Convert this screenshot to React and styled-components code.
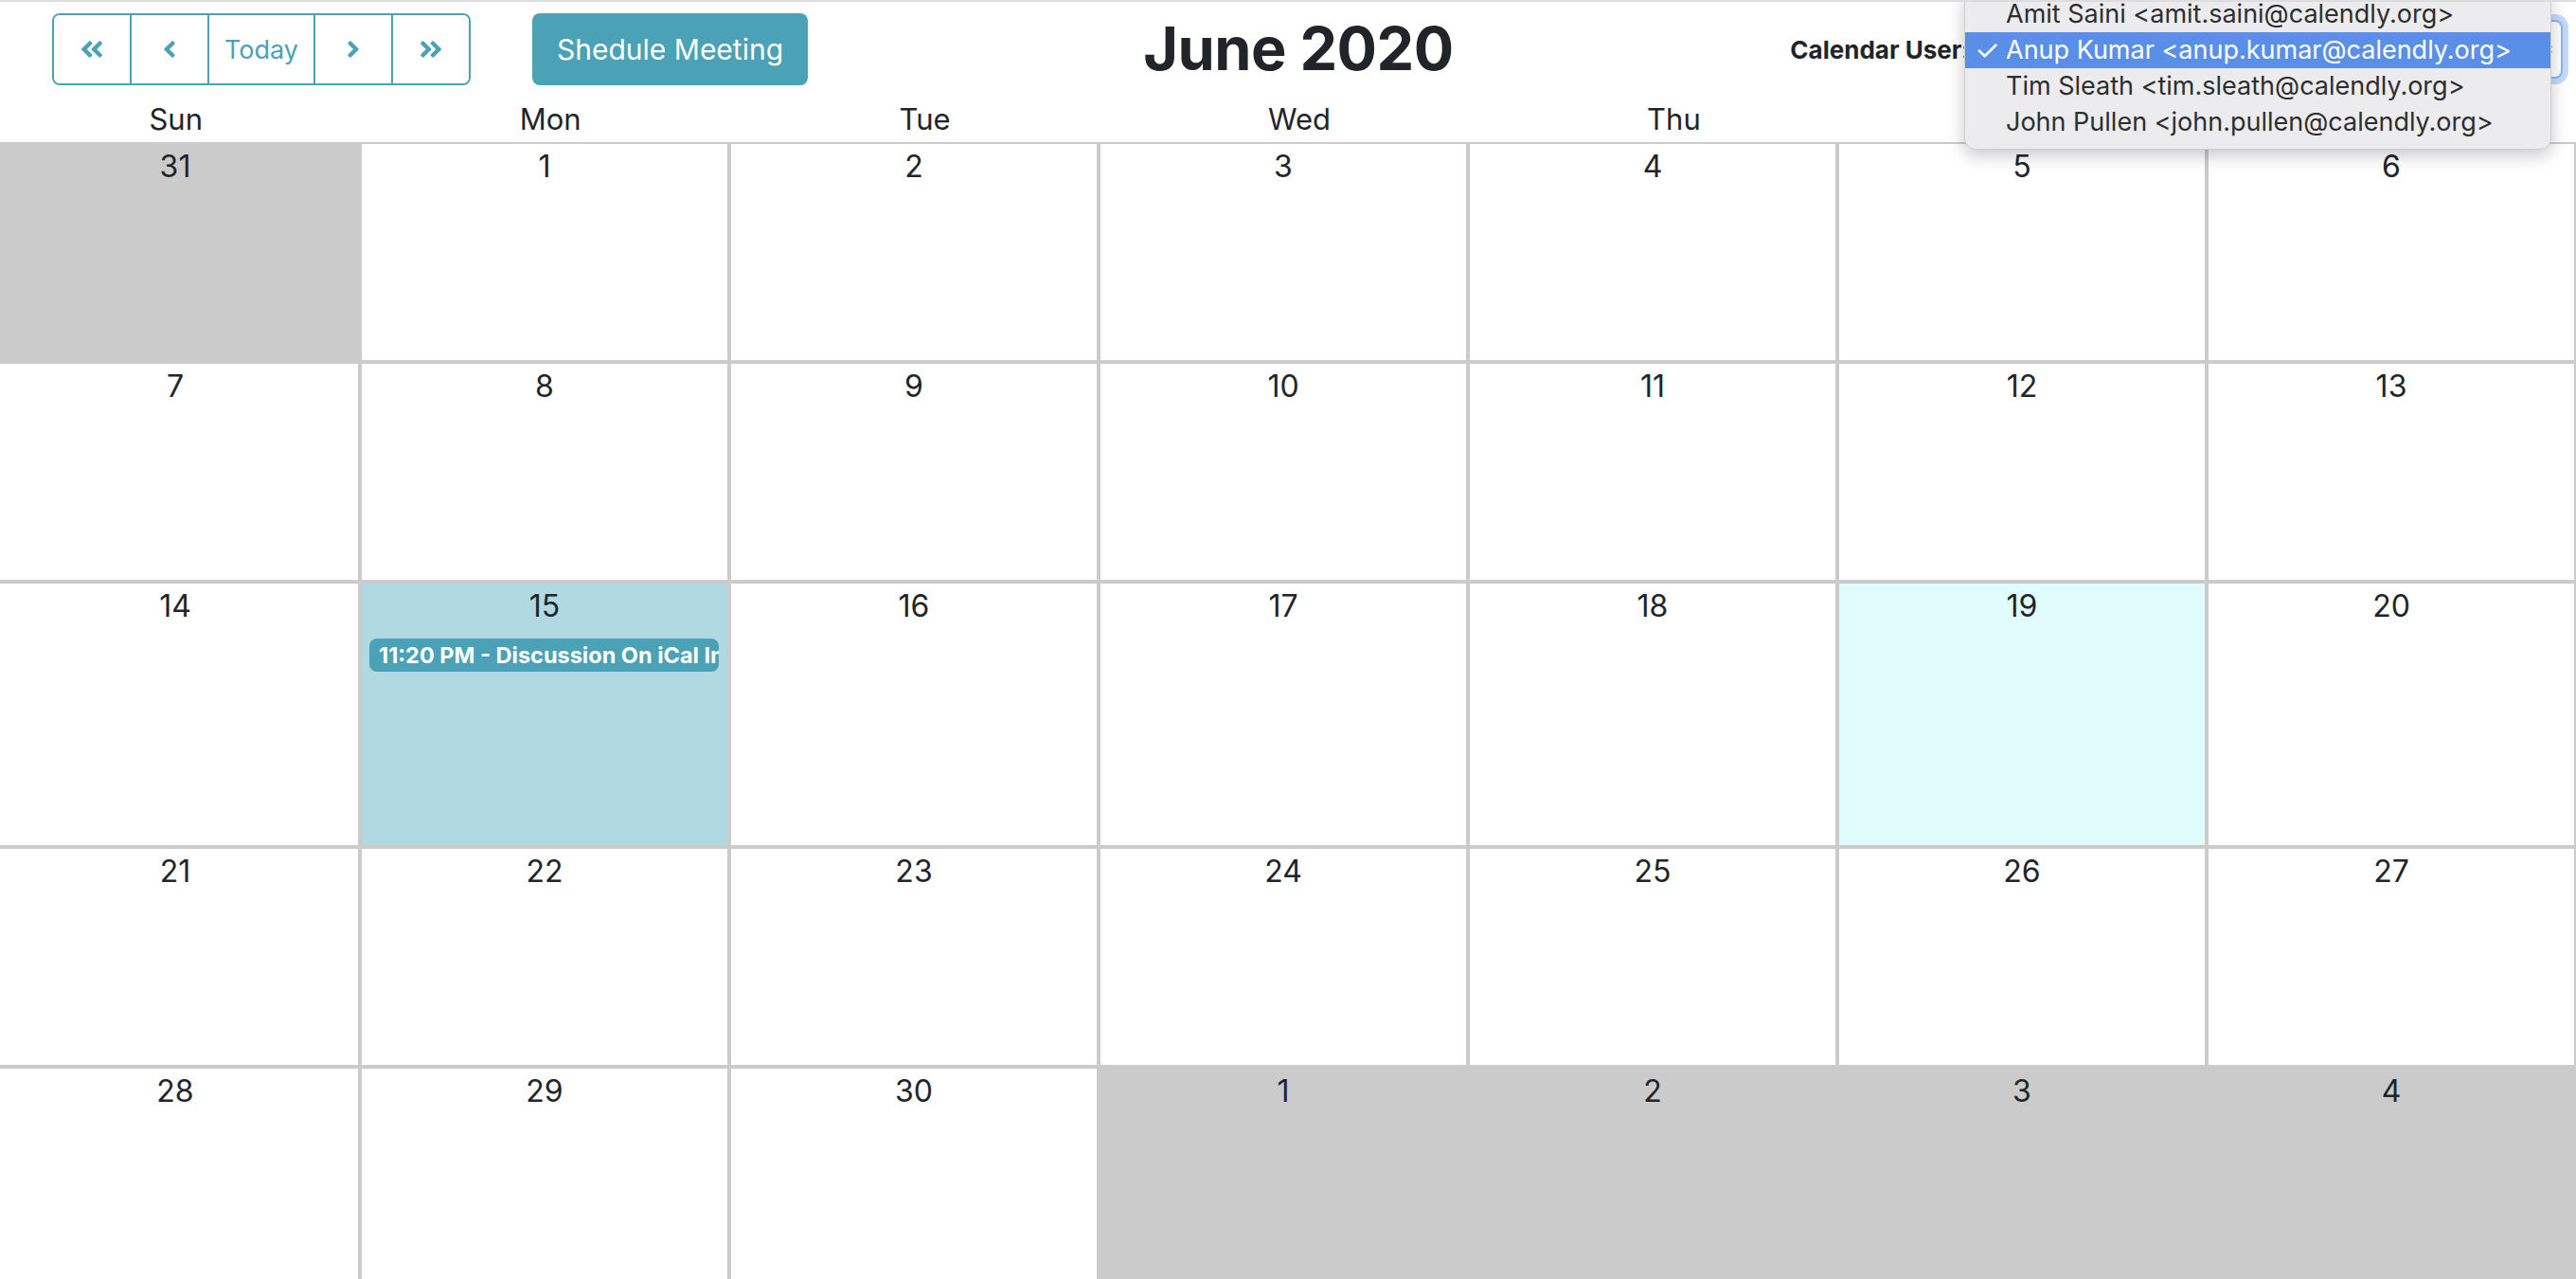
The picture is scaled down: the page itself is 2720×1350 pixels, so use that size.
import React from "react";
import styled, { createGlobalStyle } from "styled-components";
import {
  FaAngleDoubleLeft,
  FaAngleLeft,
  FaAngleRight,
  FaAngleDoubleRight,
} from "react-icons/fa";

const teal = "#4ba1b6";

const GlobalStyle = createGlobalStyle`
  html, body {
    margin: 0;
    padding: 0;
    background: #fff;
    overflow-x: hidden;
  }
  body {
    font-family: Inter, "Noto Sans", sans-serif;
    color: #212529;
  }
  * { box-sizing: border-box; }
`;

const Page = styled.div`
  border-top: 2px solid #dddde1;
  overflow: hidden;
`;

const Header = styled.header`
  display: grid;
  grid-template-columns: 1fr auto 1fr;
  align-items: center;
  padding: 12px 14px 0 36px;
`;

const LeftTools = styled.div`
  display: flex;
  align-items: center;
  gap: 65px;
  padding-left: 19px;
`;

const NavGroup = styled.div`
  display: flex;
  height: 76px;
  border: 2px solid ${teal};
  border-radius: 8px;
  overflow: hidden;
`;

const NavBtn = styled.button`
  display: flex;
  align-items: center;
  justify-content: center;
  width: ${(p) => (p.$wide ? 112 : 82)}px;
  padding: 0;
  border: none;
  border-left: 2px solid ${teal};
  background: #fff;
  color: ${teal};
  font-family: inherit;
  font-size: 27px;
  cursor: pointer;

  &:first-child {
    border-left: none;
    width: ${(p) => (p.$wide ? 110 : 80)}px;
  }
`;

const ScheduleBtn = styled.button`
  height: 76px;
  padding: 0 26px;
  border: none;
  border-radius: 8px;
  background: ${teal};
  color: #fff;
  font-family: inherit;
  font-size: 30px;
  cursor: pointer;
`;

const Title = styled.h2`
  margin: 0;
  font-size: 63px;
  font-weight: 700;
  line-height: 1.2;
  color: #212529;
  letter-spacing: -0.5px;
`;

const RightTools = styled.div`
  justify-self: end;
  display: flex;
  align-items: center;
  gap: 10px;
`;

const Label = styled.label`
  font-size: 26px;
  font-weight: 700;
  color: #212529;
`;

const SelectWrap = styled.div`
  position: relative;
`;

const SelectBox = styled.div`
  width: 616px;
  height: 62px;
  border: 2px solid #86b7f7;
  border-radius: 8px;
  box-shadow: 0 0 0 6px rgba(90, 150, 240, 0.35);
  background: #fff;
  display: flex;
  align-items: center;
  justify-content: flex-end;
  padding-right: 8px;
`;

const Menu = styled.ul`
  position: absolute;
  top: -33px;
  left: -16px;
  width: 620px;
  margin: 0;
  padding: 7px 0 9px;
  list-style: none;
  background: #ececee;
  border: 1px solid #cfcfd2;
  border-radius: 12px;
  box-shadow: 0 6px 18px rgba(0, 0, 0, 0.22);
  z-index: 10;
`;

const MenuItem = styled.li`
  position: relative;
  height: 38px;
  line-height: 38px;
  padding-left: 43px;
  font-size: 27px;
  white-space: nowrap;
  color: ${(p) => (p.$active ? "#fff" : "#2e2e30")};
  background: ${(p) => (p.$active ? "#5a8fe8" : "transparent")};
`;

const Check = styled.span`
  position: absolute;
  left: 10px;
  top: 0;
  font-size: 30px;
`;

const DayNamesWrap = styled.div`
  overflow: hidden;
  margin-top: 12px;
`;

const DayNames = styled.div`
  display: grid;
  grid-template-columns: repeat(7, 1fr);
  width: calc(100% + 48px);
  margin-left: -12px;
`;

const DayName = styled.div`
  text-align: center;
  font-size: 31px;
  line-height: 48px;
  color: #212529;
`;

const Grid = styled.div`
  display: grid;
  grid-template-columns: repeat(7, 1fr);
  width: calc(100% + 10px);
  margin-left: -10px;
`;

const Cell = styled.div`
  min-width: 0;
  border: 2px solid #cbcbcb;
  padding-bottom: 180px;
  background: ${(p) =>
    p.$muted ? "#cbcbcb" : p.$selected ? "#b1d9e2" : p.$today ? "#e1fcfd" : "#fff"};
`;

const DateNum = styled.div`
  text-align: center;
  font-size: 32px;
  line-height: 48px;
  color: #212529;
`;

const Event = styled.div`
  margin: 10px 9px 3px 8px;
  height: 35px;
  line-height: 35px;
  padding: 0 10px;
  border-radius: 8px;
  background: ${teal};
  color: #fff;
  font-size: 23.5px;
  font-weight: 700;
  white-space: nowrap;
  overflow: hidden;
`;

const SelectArrow = () => (
  <svg width="10" height="20" viewBox="0 0 10 20">
    <path d="M2 8 L5 4 L8 8" fill="none" stroke="#333" strokeWidth="2" />
    <path d="M2 12 L5 16 L8 12" fill="none" stroke="#333" strokeWidth="2" />
  </svg>
);

const days = ["Sun", "Mon", "Tue", "Wed", "Thu", "Fri", "Sat"];

const users = [
  "Amit Saini <amit.saini@calendly.org>",
  "Anup Kumar <anup.kumar@calendly.org>",
  "Tim Sleath <tim.sleath@calendly.org>",
  "John Pullen <john.pullen@calendly.org>",
];

// 5 weeks of June 2020, with days from the months around it
const weeks = [
  [{ d: 31, muted: true }, 1, 2, 3, 4, 5, 6],
  [7, 8, 9, 10, 11, 12, 13],
  [14, 15, 16, 17, 18, 19, 20],
  [21, 22, 23, 24, 25, 26, 27],
  [28, 29, 30, { d: 1, muted: true }, { d: 2, muted: true }, { d: 3, muted: true }, { d: 4, muted: true }],
];

const events = {
  15: ["11:20 PM - Discussion On iCal Integration"],
};

export default function App() {
  const selectedUser = 1;
  const today = 19;
  const selected = 15;

  return (
    <Page>
      <GlobalStyle />
      <Header>
        <LeftTools>
          <NavGroup>
            <NavBtn>
              <FaAngleDoubleLeft size={28} />
            </NavBtn>
            <NavBtn>
              <FaAngleLeft size={28} />
            </NavBtn>
            <NavBtn $wide>Today</NavBtn>
            <NavBtn>
              <FaAngleRight size={28} />
            </NavBtn>
            <NavBtn>
              <FaAngleDoubleRight size={28} />
            </NavBtn>
          </NavGroup>
          <ScheduleBtn>Shedule Meeting</ScheduleBtn>
        </LeftTools>

        <Title>June 2020</Title>

        <RightTools>
          <Label>Calendar User:</Label>
          <SelectWrap>
            <SelectBox>
              <SelectArrow />
            </SelectBox>
            <Menu>
              {users.map((u, i) => (
                <MenuItem key={u} $active={i === selectedUser}>
                  {i === selectedUser && <Check>✓</Check>}
                  {u}
                </MenuItem>
              ))}
            </Menu>
          </SelectWrap>
        </RightTools>
      </Header>

      <DayNamesWrap>
        <DayNames>
          {days.map((d) => (
            <DayName key={d}>{d}</DayName>
          ))}
        </DayNames>
      </DayNamesWrap>

      <Grid>
        {weeks.flat().map((item, i) => {
          const day = typeof item === "object" ? item.d : item;
          const muted = typeof item === "object" && item.muted;
          const list = !muted ? events[day] || [] : [];
          return (
            <Cell
              key={i}
              $muted={muted}
              $today={!muted && day === today}
              $selected={!muted && day === selected}
            >
              <DateNum>{day}</DateNum>
              {list.map((e) => (
                <Event key={e}>{e}</Event>
              ))}
            </Cell>
          );
        })}
      </Grid>
    </Page>
  );
}
